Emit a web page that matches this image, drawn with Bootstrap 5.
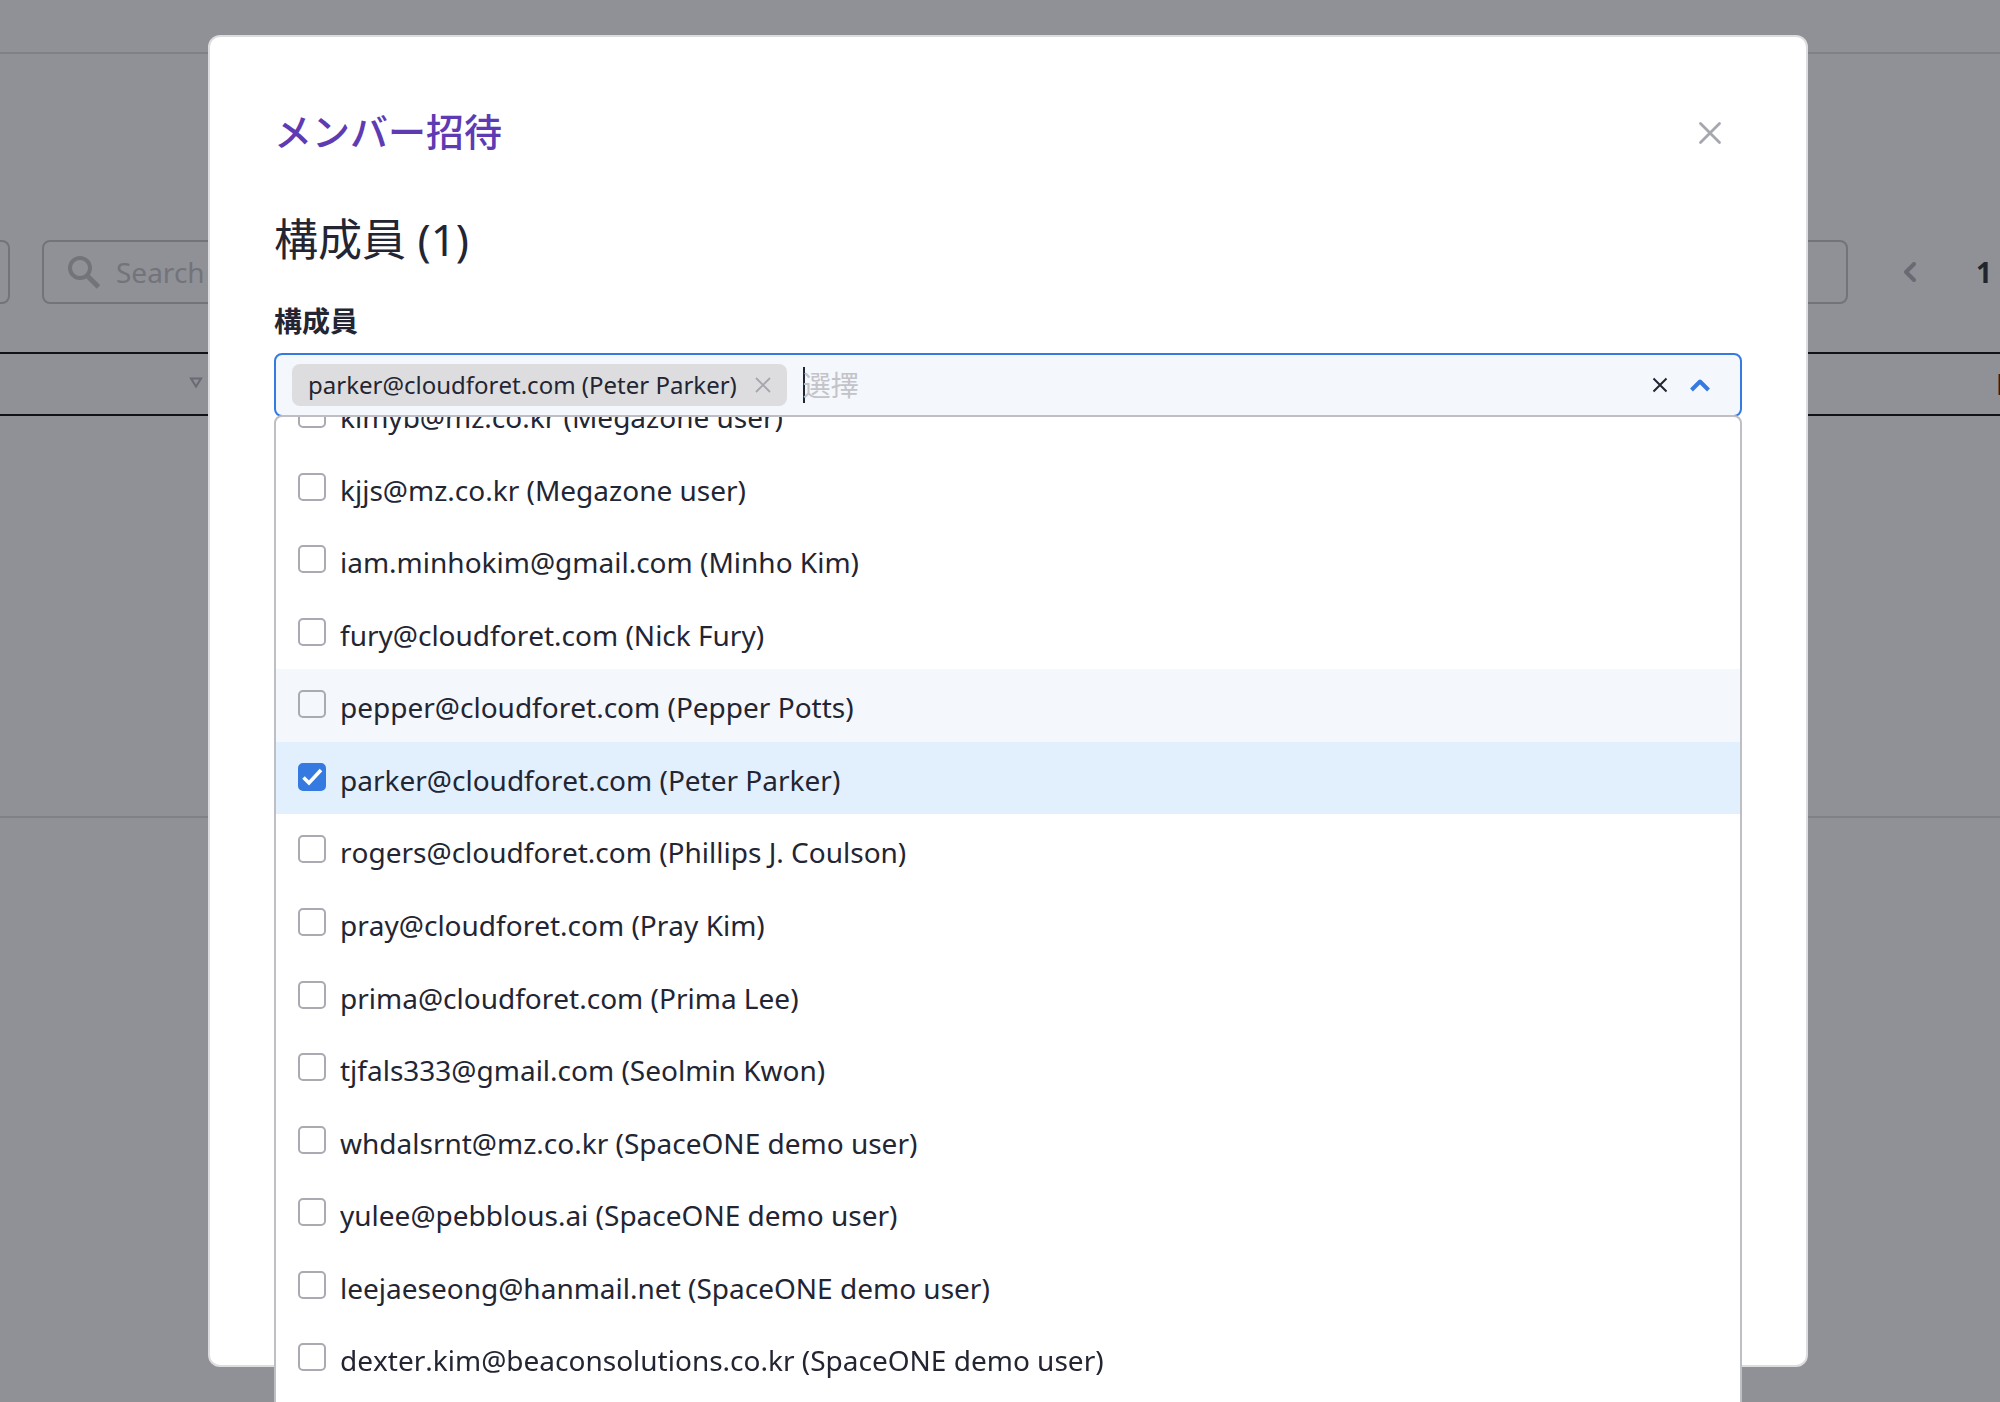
<!DOCTYPE html>
<html lang="ja">
<head>
<meta charset="utf-8">
<meta name="viewport" content="width=device-width, initial-scale=1">
<title>メンバー招待</title>
<link href="https://cdn.jsdelivr.net/npm/bootstrap@5.3.0/dist/css/bootstrap.min.css" rel="stylesheet">
<style>
  :root { --ink: #232533; --line: #c3c3c8; --blue: #357ae0; --pale: #f4f7fc; }
  body { font-family: "Noto Sans", "Noto Sans CJK JP", sans-serif; font-size: 28px; line-height: 36px; font-kerning: none; color: var(--ink); background: #fff; height: 100vh; overflow: hidden; }
  svg { display: block; flex: none; }
  button { color: inherit; }

  /* page behind the dialog */
  .topbar { height: 54px; border-bottom: 2px solid #dfdfe2; }
  .tools { padding-top: 186px; height: 298px; }
  .size-box { width: 10px; height: 64px; border: 2px solid var(--line); border-left: 0; border-radius: 0 8px 8px 0; background: #fff; }
  .search-box { width: 1806px; height: 64px; margin-left: 32px; padding-left: 24px; gap: 14px; border: 2px solid var(--line); border-radius: 8px; color: var(--line); flex: none; }
  .search-box input { color: inherit; outline: 0; }
  .search-box input::placeholder { color: var(--line); opacity: 1; }
  .pager { height: 64px; margin-left: 56px; gap: 60px; flex: none; }
  .head-row { height: 64px; border-top: 2px solid #000; border-bottom: 2px solid #000; padding-left: 189px; white-space: nowrap; }
  .head-row strong { width: 4px; }
  .grid-body { height: 402px; border-bottom: 2px solid #dfdfe2; }

  /* dialog */
  .shade { position: fixed; inset: 0; background: rgba(34, 36, 46, .5); padding: 35px 192px 35px 208px; }
  .dialog-box { background: #fff; border: 2px solid #dddddf; border-radius: 12px; padding: 64px; }
  .dialog-title { font-size: 38px; line-height: 60px; color: #5f3bb3; font-weight: 500; }
  .section-title { font-size: 44px; line-height: 56px; margin-top: 50px; font-weight: 400; }
  .field-label { line-height: 36px; margin-top: 36px; margin-bottom: 14px; font-weight: 700; }
  .icon-btn { background: none; border: 0; padding: 0; }
  .picker { position: relative; }
  .picker-field { height: 64px; border: 2px solid var(--blue); border-radius: 8px; background: var(--pale); padding: 0 30px 0 16px; }
  .tag-chip { height: 42px; border-radius: 8px; background: #dddddf; padding: 0 16px; gap: 18px; font-size: 24px; }
  .caret { width: 2px; height: 36px; margin: 0 -2px 0 16px; background: var(--ink); }
  .picker-field input { outline: 0; color: inherit; }
  .picker-field input::placeholder { color: var(--line); opacity: 1; }
  .field-actions { gap: 22px; }
  .menu-box { position: absolute; top: 62px; left: 0; right: 0; border: 2px solid #bebfc4; border-radius: 8px; background: #fff; overflow: hidden; padding-bottom: 64px; }
  .menu-list { display: grid; grid-auto-rows: 1fr; height: 1016px; margin: -38px 0 0; }
  .menu-list li { padding: 21px 22px 0; }
  .menu-list label { line-height: 35px; margin-left: 14px; overflow: hidden; }
  .menu-list .form-check-input { width: 28px; height: 28px; margin: 0; border: 2px solid #a9aab2; border-radius: 5px; background-color: transparent; flex: none; }
  .menu-list .form-check-input:checked { background-color: var(--blue); border-color: var(--blue); background-size: 28px 28px; background-image: url("data:image/svg+xml,%3Csvg xmlns='http://www.w3.org/2000/svg' viewBox='0 0 28 28'%3E%3Cpath d='M5.5 14.5l5.5 5.5L23 7' fill='none' stroke='%23fff' stroke-width='3.6'/%3E%3C/svg%3E"); }
  .row-hover { background: var(--pale); }
  .row-picked { background: #e2effd; }
  .filler { height: 884px; }
</style>
</head>
<body>
<header class="topbar"></header>
<main>
  <div class="tools d-flex align-items-start overflow-hidden">
    <div class="size-box flex-shrink-0"></div>
    <div class="search-box d-flex align-items-center">
      <svg width="34" height="34" viewBox="0 0 34 34" fill="none" stroke="currentColor" stroke-width="4"><circle cx="12" cy="13" r="10"/><path d="M20 21.500L30.500 32" stroke-width="5"/></svg>
      <input class="border-0 bg-transparent p-0 flex-grow-1" type="text" placeholder="Search" aria-label="Search">
    </div>
    <nav class="pager d-flex align-items-center" aria-label="Pages">
      <button class="icon-btn" type="button" aria-label="Previous"><svg width="12" height="20" viewBox="0 0 12 20" fill="none" stroke="#b0b0b8" stroke-width="4" stroke-linecap="round" stroke-linejoin="round"><path d="M10 2L2 10l8 8"/></svg></button>
      <strong>1</strong>
    </nav>
  </div>
  <div class="head-row d-flex align-items-center justify-content-between overflow-hidden">
    <svg width="14" height="14" viewBox="0 0 14 14" fill="none" stroke="#b0b0b8" stroke-width="2"><path d="M2 1.500h10L7 9.500z"/></svg>
    <strong>E</strong>
  </div>
  <div class="grid-body"></div>
</main>

<div class="shade">
  <section class="dialog-box" role="dialog" aria-modal="true" aria-labelledby="dlgTitle">
    <div class="d-flex align-items-center justify-content-between pe-3">
      <h1 class="dialog-title m-0" id="dlgTitle">メンバー招待</h1>
      <button class="icon-btn" type="button" aria-label="Close"><svg width="32" height="32" viewBox="0 0 32 32" fill="none" stroke="#a5a6ae" stroke-width="2.8" stroke-linecap="round"><path d="M6.500 8.500l19 19M25.500 8.500l-19 19"/></svg></button>
    </div>
    <h2 class="section-title mb-0">構成員 (1)</h2>
    <label class="field-label d-block" for="member">構成員</label>
    <div class="picker">
      <div class="picker-field d-flex align-items-center">
        <span class="tag-chip d-flex align-items-center text-nowrap">parker@cloudforet.com (Peter Parker)
          <button class="icon-btn" type="button" aria-label="Remove"><svg width="16" height="16" viewBox="0 0 16 16" fill="none" stroke="#a5a6ae" stroke-width="1.800"><path d="M1 1l14 14M15 1L1 15"/></svg></button>
        </span>
        <span class="caret"></span>
        <input class="border-0 bg-transparent p-0 flex-grow-1" id="member" type="text" placeholder="選擇">
        <div class="field-actions d-flex align-items-center">
          <button class="icon-btn" type="button" aria-label="Clear"><svg width="16" height="16" viewBox="0 0 16 16" fill="none" stroke="#232533" stroke-width="2"><path d="M1.500 1.500l13 13M14.500 1.500l-13 13"/></svg></button>
          <button class="icon-btn" type="button" aria-label="Toggle"><svg width="20" height="14" viewBox="0 0 20 14" fill="none" stroke="#357ae0" stroke-width="4"><path d="M1.500 12L10 3.500l8.500 8.500" stroke-linejoin="round"/></svg></button>
        </div>
      </div>
      <div class="menu-box">
        <ul class="menu-list list-unstyled">
          <li class="d-flex align-items-start"><input class="form-check-input" type="checkbox" id="m1"><label for="m1">kimyb@mz.co.kr (Megazone user)</label></li>
          <li class="d-flex align-items-start"><input class="form-check-input" type="checkbox" id="m2"><label for="m2">kjjs@mz.co.kr (Megazone user)</label></li>
          <li class="d-flex align-items-start"><input class="form-check-input" type="checkbox" id="m3"><label for="m3">iam.minhokim@gmail.com (Minho Kim)</label></li>
          <li class="d-flex align-items-start"><input class="form-check-input" type="checkbox" id="m4"><label for="m4">fury@cloudforet.com (Nick Fury)</label></li>
          <li class="d-flex align-items-start row-hover"><input class="form-check-input" type="checkbox" id="m5"><label for="m5">pepper@cloudforet.com (Pepper Potts)</label></li>
          <li class="d-flex align-items-start row-picked"><input class="form-check-input" type="checkbox" id="m6" checked><label for="m6">parker@cloudforet.com (Peter Parker)</label></li>
          <li class="d-flex align-items-start"><input class="form-check-input" type="checkbox" id="m7"><label for="m7">rogers@cloudforet.com (Phillips J. Coulson)</label></li>
          <li class="d-flex align-items-start"><input class="form-check-input" type="checkbox" id="m8"><label for="m8">pray@cloudforet.com (Pray Kim)</label></li>
          <li class="d-flex align-items-start"><input class="form-check-input" type="checkbox" id="m9"><label for="m9">prima@cloudforet.com (Prima Lee)</label></li>
          <li class="d-flex align-items-start"><input class="form-check-input" type="checkbox" id="m10"><label for="m10">tjfals333@gmail.com (Seolmin Kwon)</label></li>
          <li class="d-flex align-items-start"><input class="form-check-input" type="checkbox" id="m11"><label for="m11">whdalsrnt@mz.co.kr (SpaceONE demo user)</label></li>
          <li class="d-flex align-items-start"><input class="form-check-input" type="checkbox" id="m12"><label for="m12">yulee@pebblous.ai (SpaceONE demo user)</label></li>
          <li class="d-flex align-items-start"><input class="form-check-input" type="checkbox" id="m13"><label for="m13">leejaeseong@hanmail.net (SpaceONE demo user)</label></li>
          <li class="d-flex align-items-start"><input class="form-check-input" type="checkbox" id="m14"><label for="m14">dexter.kim@beaconsolutions.co.kr (SpaceONE demo user)</label></li>
        </ul>
      </div>
    </div>
    <div class="filler"></div>
  </section>
</div>
<script src="https://cdn.jsdelivr.net/npm/bootstrap@5.3.0/dist/js/bootstrap.bundle.min.js"></script>
</body>
</html>
